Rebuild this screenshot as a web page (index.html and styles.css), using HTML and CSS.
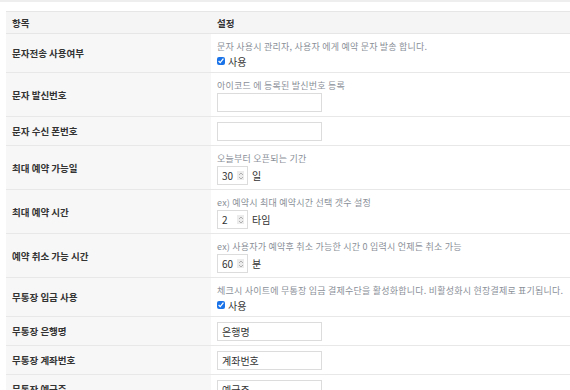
FILE: index.html
```html
<!DOCTYPE html>
<html>
<head>
    <title>예약 설정</title>
    <link rel="stylesheet" href="styles.css">
</head>
<body>
    <div class="top-line"></div>
    <div class="wrap">
        <table class="config-table">
            <thead>
                <tr>
                    <th class="col-label">항목</th>
                    <th>설정</th>
                </tr>
            </thead>
            <tbody>
                <tr>
                    <th>문자전송 사용여부</th>
                    <td>
                        <div class="desc">문자 사용시 관리자, 사용자 에게 예약 문자 발송 합니다.</div>
                        <label class="check"><input type="checkbox" checked> 사용</label>
                    </td>
                </tr>
                <tr>
                    <th>문자 발신번호</th>
                    <td>
                        <div class="desc">아이코드 에 등록된 발신번호 등록</div>
                        <input type="text" class="text-input">
                    </td>
                </tr>
                <tr>
                    <th>문자 수신 폰번호</th>
                    <td><input type="text" class="text-input"></td>
                </tr>
                <tr>
                    <th>최대 예약 가능일</th>
                    <td>
                        <div class="desc">오늘부터 오픈되는 기간</div>
                        <div class="num-line">
                            <span class="num-box"><input type="text" value="30"><span class="spin"><svg width="6" height="8" viewBox="0 0 6 8"><path d="M1 3 3 1 5 3M1 5 3 7 5 5" fill="none" stroke="#a0a0a0" stroke-width="0.8"/></svg></span></span>
                            <span class="unit">일</span>
                        </div>
                    </td>
                </tr>
                <tr>
                    <th>최대 예약 시간</th>
                    <td>
                        <div class="desc">ex) 예약시 최대 예약시간 선택 갯수 설정</div>
                        <div class="num-line">
                            <span class="num-box"><input type="text" value="2"><span class="spin"><svg width="6" height="8" viewBox="0 0 6 8"><path d="M1 3 3 1 5 3M1 5 3 7 5 5" fill="none" stroke="#a0a0a0" stroke-width="0.8"/></svg></span></span>
                            <span class="unit">타임</span>
                        </div>
                    </td>
                </tr>
                <tr>
                    <th>예약 취소 가능 시간</th>
                    <td>
                        <div class="desc">ex) 사용자가 예약후 취소 가능한 시간 0 입력시 언제든 취소 가능</div>
                        <div class="num-line">
                            <span class="num-box"><input type="text" value="60"><span class="spin"><svg width="6" height="8" viewBox="0 0 6 8"><path d="M1 3 3 1 5 3M1 5 3 7 5 5" fill="none" stroke="#a0a0a0" stroke-width="0.8"/></svg></span></span>
                            <span class="unit">분</span>
                        </div>
                    </td>
                </tr>
                <tr>
                    <th>무통장 입금 사용</th>
                    <td>
                        <div class="desc">체크시 사이트에 무통장 입금 결제수단을 활성화합니다. 비활성화시 현장결제로 표기됩니다.</div>
                        <label class="check"><input type="checkbox" checked> 사용</label>
                    </td>
                </tr>
                <tr>
                    <th>무통장 은행명</th>
                    <td><input type="text" class="text-input" value="은행명"></td>
                </tr>
                <tr>
                    <th>무통장 계좌번호</th>
                    <td><input type="text" class="text-input" value="계좌번호"></td>
                </tr>
                <tr>
                    <th>무통장 예금주</th>
                    <td><input type="text" class="text-input" value="예금주"></td>
                </tr>
            </tbody>
        </table>
    </div>
</body>
</html>
```

FILE: styles.css
```css
body {
    margin: 0;
    font-family: "Noto Sans CJK KR", "Noto Sans", sans-serif;
    font-size: 10px;
    color: #333;
    background: #fff;
    overflow: hidden;
}
.top-line {
    height: 2px;
    background: #eee;
}
.wrap {
    padding: 9px 0 0 6px;
}
.config-table {
    width: 100%;
    border-collapse: collapse;
}
.config-table thead th {
    background: #f5f5f5;
    border-top: 1px solid #e6e6e6;
    border-bottom: 1px solid #e6e6e6;
    height: 21px;
    padding: 0 6px;
    text-align: left;
    font-weight: bold;
    font-size: 9.5px;
    color: #333;
}
.config-table thead th.col-label {
    width: 193px;
}
.config-table tbody th {
    background: #f7f7f7;
    text-align: left;
    font-weight: bold;
    font-size: 9.5px;
    color: #333;
    padding: 0 6px;
    border-bottom: 1px solid #e8e8e8;
}
.config-table tbody td {
    padding: 5px 6px 4px;
    border-bottom: 1px solid #e8e8e8;
    vertical-align: top;
}
.desc {
    font-size: 9px;
    letter-spacing: 0.22px;
    line-height: 15px;
    color: #8a8f98;
    white-space: nowrap;
}
.check {
    display: flex;
    align-items: center;
    height: 14px;
    font-size: 10px;
    color: #333;
}
.check input {
    margin: 0 3px 0 0;
    width: 8px;
    height: 8px;
    accent-color: #1a73e8;
}
.text-input {
    display: block;
    width: 105px;
    height: 19px;
    box-sizing: border-box;
    border: 1px solid #dcdcdc;
    padding: 0 4px;
    font-family: inherit;
    font-size: 10px;
    color: #333;
    outline: none;
}
.num-line {
    display: flex;
    align-items: center;
    height: 19px;
}
.num-box {
    display: flex;
    align-items: center;
    width: 31px;
    height: 19px;
    box-sizing: border-box;
    border: 1px solid #dcdcdc;
    padding: 0 3px 0 4px;
}
.num-box input {
    width: 14px;
    border: none;
    padding: 0;
    font-family: inherit;
    font-size: 10px;
    color: #333;
    outline: none;
}
.spin {
    display: flex;
    align-items: center;
    justify-content: center;
    width: 7px;
    height: 9px;
    margin-left: auto;
    background: #ececec;
}
.unit {
    margin-left: 4px;
    font-size: 10px;
    color: #333;
}
```
